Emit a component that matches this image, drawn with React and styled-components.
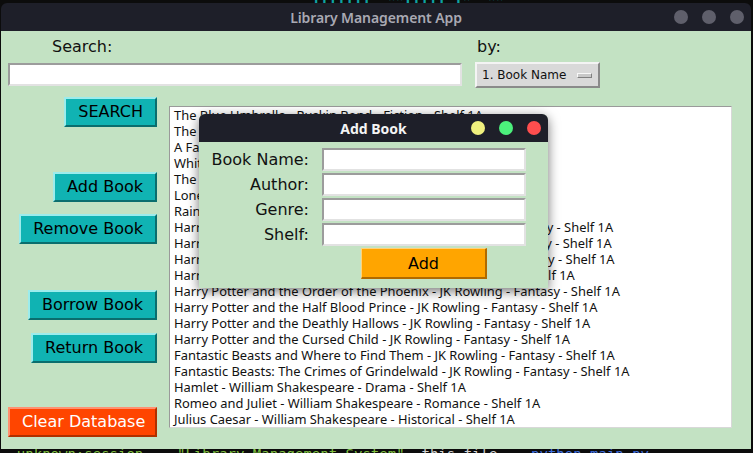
import styled, { createGlobalStyle } from "styled-components";

const GlobalStyle = createGlobalStyle`
  html, body {
    margin: 0;
    padding: 0;
    background: #0c0c0c;
  }
  * {
    box-sizing: border-box;
  }
`;

const books = [
  "The Blue Umbrella - Ruskin Bond - Fiction - Shelf 1A",
  "The Room on the Roof - Ruskin Bond - Fiction - Shelf 1A",
  "A Face in the Dark - Ruskin Bond - Horror - Shelf 1A",
  "White Tiger - Aravind Adiga - Fiction - Shelf 1A",
  "The Night Train at Deoli - Ruskin Bond - Fiction - Shelf 1A",
  "Lone Fox Dancing - Ruskin Bond - Biography - Shelf 1A",
  "Rain in the Mountains - Ruskin Bond - Fiction - Shelf 1A",
  "Harry Potter and the Philosopher's Stone - JK Rowling - Fantasy - Shelf 1A",
  "Harry Potter and the Chamber of Secrets - JK Rowling - Fantasy - Shelf 1A",
  "Harry Potter and the Prisoner of Azkaban - JK Rowling - Fantasy - Shelf 1A",
  "Harry Potter and the Goblet of Fire - JK Rowling - Fantasy - Shelf 1A",
  "Harry Potter and the Order of the Phoenix - JK Rowling - Fantasy - Shelf 1A",
  "Harry Potter and the Half Blood Prince - JK Rowling - Fantasy - Shelf 1A",
  "Harry Potter and the Deathly Hallows - JK Rowling - Fantasy - Shelf 1A",
  "Harry Potter and the Cursed Child - JK Rowling - Fantasy - Shelf 1A",
  "Fantastic Beasts and Where to Find Them - JK Rowling - Fantasy - Shelf 1A",
  "Fantastic Beasts: The Crimes of Grindelwald - JK Rowling - Fantasy - Shelf 1A",
  "Hamlet - William Shakespeare - Drama - Shelf 1A",
  "Romeo and Juliet - William Shakespeare - Romance - Shelf 1A",
  "Julius Caesar - William Shakespeare - Historical - Shelf 1A",
];

export default function App() {
  return (
    <Desktop>
      <GlobalStyle />
      <Terminal>
        <TermLine $top="-13px">
          <Span $c="#0fa3a3">{"          ╰─  "}</Span>
          <Span $c="#0fa3a3">{"                       ┃┃┃┃┃┃┃  ‥‥┃┃┃┃┃ ┃‥  ‥‥"}</Span>
        </TermLine>
        <TermLine $top="446px">
          <Span $c="#7fbf3f">{"  unknown:session  "}</Span>
          <Span $c="#7fbf3f">{"  \"Library Management System\"  "}</Span>
          <Span $c="#d0d0d0">{"this file  "}</Span>
          <Span $c="#3f6fdf">{"  python main.py"}</Span>
        </TermLine>
      </Terminal>

      <Window>
        <TitleBar>
          <TitleText>Library Management App</TitleText>
          <Dots>
            <Dot $color="#5f5f6b" />
            <Dot $color="#5f5f6b" />
            <Dot $color="#5f5f6b" />
          </Dots>
        </TitleBar>

        <Body>
          <TopArea>
            <Label $indent="44px">Search:</Label>
            <Label $indent="2px">by:</Label>
            <Entry $width="454px" $offset="1px" />
            <OptionMenu>
              <span>1. Book Name</span>
              <Indicator />
            </OptionMenu>
          </TopArea>

          <Main>
            <ButtonColumn>
              <Button $gap="9px">SEARCH</Button>
              <Button $gap="45px">Add Book</Button>
              <Button $gap="12px">Remove Book</Button>
              <Button $gap="46px">Borrow Book</Button>
              <Button $gap="13px">Return Book</Button>
              <Button $gap="44px" $variant="danger" $full>
                Clear Database
              </Button>
            </ButtonColumn>

            <ListBox>
              {books.map((b) => (
                <ListRow key={b}>{b}</ListRow>
              ))}
            </ListBox>
          </Main>
        </Body>

        <Dialog>
          <DialogTitleBar>
            <DialogTitle>Add Book</DialogTitle>
            <Dots>
              <Dot $color="#f0f07e" />
              <Dot $color="#4cf07c" />
              <Dot $color="#ff4e4e" />
            </Dots>
          </DialogTitleBar>
          <Form>
            <FormLabel>Book Name:</FormLabel>
            <Entry $width="204px" />
            <FormLabel>Author:</FormLabel>
            <Entry $width="204px" />
            <FormLabel>Genre:</FormLabel>
            <Entry $width="204px" />
            <FormLabel>Shelf:</FormLabel>
            <Entry $width="204px" />
            <AddButton>Add</AddButton>
          </Form>
        </Dialog>
      </Window>
    </Desktop>
  );
}

const Desktop = styled.div`
  position: relative;
  width: 753px;
  height: 453px;
  background: #0c0c0c;
  overflow: hidden;
`;

const Terminal = styled.div`
  position: absolute;
  inset: 0;
  font-family: "DejaVu Sans Mono", monospace;
  font-size: 14px;
  line-height: 17px;
`;

const TermLine = styled.div`
  position: absolute;
  left: 0;
  top: ${(p) => p.$top};
  white-space: pre;
`;

const Span = styled.span`
  color: ${(p) => p.$c};
`;

const Window = styled.div`
  position: absolute;
  left: 1px;
  top: 3px;
  width: 750px;
  height: 446px;
  border-radius: 6px 6px 0 0;
  overflow: hidden;
  display: flex;
  flex-direction: column;
  font-family: "DejaVu Sans", sans-serif;
`;

const TitleBar = styled.div`
  position: relative;
  height: 28px;
  flex: none;
  background: #1e1f29;
  display: flex;
  align-items: center;
  justify-content: center;
`;

const TitleText = styled.div`
  font-family: "Noto Sans", sans-serif;
  font-weight: 600;
  font-size: 14px;
  color: #a9a9b3;
  letter-spacing: -0.1px;
`;

const Dots = styled.div`
  position: absolute;
  right: 7px;
  top: 7px;
  display: flex;
  gap: 14px;
`;

const Dot = styled.span`
  width: 14px;
  height: 14px;
  border-radius: 50%;
  background: ${(p) => p.$color};
`;

const Body = styled.div`
  flex: 1;
  background: #c3e2c3;
  padding-left: 7px;
  display: flex;
  flex-direction: column;
`;

const TopArea = styled.div`
  display: grid;
  grid-template-columns: 454px 125px;
  column-gap: 13px;
  align-items: start;
`;

const Label = styled.div`
  font-size: 16px;
  line-height: 18px;
  color: #111;
  padding: 7px 0 0 ${(p) => p.$indent};
  height: 31px;
`;

const Entry = styled.div`
  width: ${(p) => p.$width};
  height: 23px;
  margin-top: ${(p) => p.$offset || "0"};
  background: #fff;
  border-top: 2px solid #9c9c9c;
  border-left: 2px solid #9c9c9c;
  border-right: 2px solid #e2e2e2;
  border-bottom: 2px solid #e2e2e2;
`;

const OptionMenu = styled.div`
  height: 26px;
  background: #d9d9d9;
  border-top: 2px solid #f4f4f4;
  border-left: 2px solid #f4f4f4;
  border-right: 2px solid #8a8a8a;
  border-bottom: 2px solid #8a8a8a;
  display: flex;
  align-items: center;
  justify-content: space-between;
  padding: 0 6px 0 5px;
  font-size: 12px;
  color: #111;
`;

const Indicator = styled.span`
  width: 15px;
  height: 5px;
  background: #c8c8c8;
  border-top: 1px solid #f8f8f8;
  border-left: 1px solid #f8f8f8;
  border-right: 1px solid #808080;
  border-bottom: 1px solid #808080;
`;

const Main = styled.div`
  display: flex;
  gap: 12px;
`;

const ButtonColumn = styled.div`
  width: 149px;
  display: flex;
  flex-direction: column;
  align-items: flex-end;
`;

const Button = styled.button`
  margin-top: ${(p) => p.$gap};
  width: ${(p) => (p.$full ? "100%" : "auto")};
  height: 30px;
  padding: 0 12px;
  font-family: "DejaVu Sans", sans-serif;
  font-size: 16px;
  line-height: 1;
  color: ${(p) => (p.$variant === "danger" ? "#fff" : "#000")};
  background: ${(p) => (p.$variant === "danger" ? "#ff4500" : "#10b3b3")};
  border-style: solid;
  border-width: 2px;
  border-color: ${(p) =>
    p.$variant === "danger"
      ? "#ff9070 #b03000 #b03000 #ff9070"
      : "#9cecec #0a6e6e #0a6e6e #9cecec"};
  white-space: nowrap;
`;

const ListBox = styled.div`
  margin-top: 18px;
  width: 563px;
  height: 322px;
  background: #fff;
  border-top: 1px solid #9a9a9a;
  border-left: 1px solid #9a9a9a;
  border-right: 1px solid #d8d8d8;
  border-bottom: 1px solid #d8d8d8;
  padding: 0 4px;
  overflow: hidden;
`;

const ListRow = styled.div`
  font-family: "Noto Sans", sans-serif;
  font-size: 12.9px;
  line-height: 16px;
  height: 16px;
  color: #111;
  white-space: nowrap;
`;

const Dialog = styled.div`
  position: absolute;
  left: 198px;
  top: 111px;
  width: 349px;
  height: 174px;
  border-radius: 6px 6px 0 0;
  overflow: hidden;
  background: #c3e2c3;
  box-shadow: 0 3px 12px rgba(0, 0, 0, 0.55);
  display: flex;
  flex-direction: column;
`;

const DialogTitleBar = styled(TitleBar)``;

const DialogTitle = styled.div`
  font-family: "Noto Sans", sans-serif;
  font-weight: 700;
  font-size: 14px;
  color: #f4f4f4;
`;

const Form = styled.div`
  display: grid;
  grid-template-columns: 110px 204px;
  column-gap: 13px;
  row-gap: 2px;
  padding-top: 6px;
  align-items: center;
`;

const FormLabel = styled.div`
  font-size: 16px;
  line-height: 18px;
  color: #111;
  text-align: right;
`;

const AddButton = styled.button`
  grid-column: 2;
  justify-self: center;
  width: 126px;
  height: 31px;
  font-family: "DejaVu Sans", sans-serif;
  font-size: 16px;
  color: #000;
  background: #ffa500;
  border-style: solid;
  border-width: 1px 2px 2px 1px;
  border-color: #ffd27a #b06a00 #b06a00 #ffd27a;
`;
